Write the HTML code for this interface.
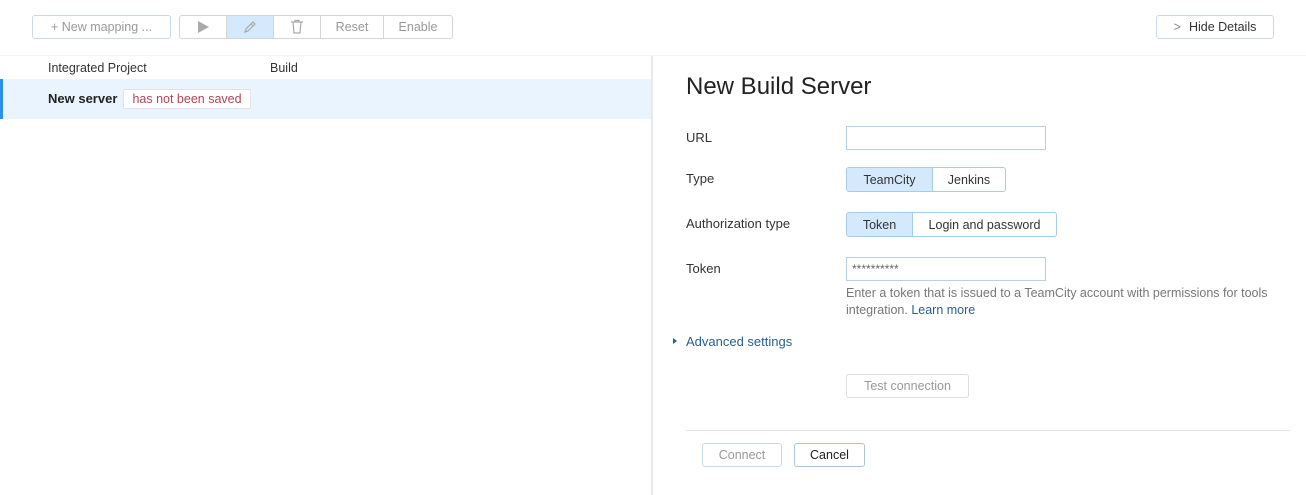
<!DOCTYPE html><html><head><style>
*{box-sizing:border-box;margin:0;padding:0}
body{width:1306px;height:495px;position:relative;background:#fff;font-family:"Liberation Sans",sans-serif;font-size:13px;color:#333;overflow:hidden}
.a{position:absolute}
.btn{position:absolute;border:1px solid #c9d9e8;border-radius:3px;background:#fff;color:#999;font-size:12.5px;display:flex;align-items:center;justify-content:center}
.grp{position:absolute;display:flex;border:1px solid #d5d5d5;border-radius:3px;height:24px;overflow:hidden}
.grp div{border-right:1px solid #d5d5d5;display:flex;align-items:center;justify-content:center;color:#999;font-size:12.5px}
.grp div:last-child{border-right:none}
.seg{position:absolute;display:flex;border:1px solid #a8cbe8;border-radius:3px;height:25px;overflow:hidden}
.seg div{display:flex;align-items:center;justify-content:center;font-size:12.5px;color:#333}
.seg .on{background:#d4eafc;border-right:1px solid #a8cbe8}
.lbl{position:absolute;left:686px;font-size:13px;color:#333}
.inp{position:absolute;left:846px;width:200px;height:24px;border:1px solid #b8d0e4}
</style></head><body>
<div class="btn" style="left:32px;top:15px;width:139px;height:24px">+ New mapping ...</div>
<div class="grp" style="left:179px;top:15px;width:274px">
<div style="width:47px"><svg width="14" height="14"><path d="M2 1 L13 7 L2 13Z" fill="#aaa"/></svg></div>
<div style="width:47px;background:#d4eafc"><svg width="16" height="16"><path d="M3 13 L4 10 L11 3 L13 5 L6 12Z M9 5 L11 7" fill="none" stroke="#aaa" stroke-width="1.2"/></svg></div>
<div style="width:47px"><svg width="14" height="16"><path d="M1 3H13M5 3V1.5H9V3M3 3L4 14H10L11 3" fill="none" stroke="#aaa" stroke-width="1.2"/></svg></div>
<div style="width:63px">Reset</div>
<div style="flex:1">Enable</div>
</div>
<div class="btn" style="left:1156px;top:15px;width:118px;height:24px;color:#333"><span style="color:#888;margin-right:8px">&gt;</span>Hide Details</div>
<div class="a" style="left:0;top:55px;width:1306px;height:1px;background:#f1f3f5"></div>
<div class="a" style="left:48px;top:61px;font-size:12.5px">Integrated Project</div>
<div class="a" style="left:270px;top:61px;font-size:12.5px">Build</div>
<div class="a" style="left:0;top:79px;width:652px;height:40px;background:#e9f4fe;border-left:3px solid #2b8ef0"></div>
<div class="a" style="left:48px;top:91px;font-weight:bold;font-size:13px;color:#222">New server</div>
<div class="a" style="left:123px;top:89px;width:128px;height:20px;background:#fff;border:1px solid #e3e3e3;border-radius:2px;color:#b0455a;font-size:12.5px;text-align:center;line-height:18px">has not been saved</div>
<div class="a" style="left:651px;top:56px;width:2px;height:439px;background:#e6e9ed"></div>
<div class="a" style="left:686px;top:73px;font-size:24px;color:#222">New Build Server</div>
<div class="lbl" style="top:130px">URL</div><div class="inp" style="top:126px"></div>
<div class="lbl" style="top:171px">Type</div>
<div class="seg" style="left:846px;top:167px;width:160px"><div class="on" style="width:86px">TeamCity</div><div style="flex:1">Jenkins</div></div>
<div class="lbl" style="top:216px">Authorization type</div>
<div class="seg" style="left:846px;top:212px;width:211px"><div class="on" style="width:66px">Token</div><div style="flex:1">Login and password</div></div>
<div class="lbl" style="top:261px">Token</div><div class="inp" style="top:257px;color:#666;font-size:12px;padding:4px 5px">**********</div>
<div class="a" style="left:846px;top:285px;width:450px;font-size:12.5px;line-height:17px;color:#777">Enter a token that is issued to a TeamCity account with permissions for tools integration. <span style="color:#2a5d8f">Learn more</span></div>
<div class="a" style="left:673px;top:338px;width:0;height:0;border-left:4px solid #2a5d8f;border-top:3px solid transparent;border-bottom:3px solid transparent"></div>
<div class="a" style="left:686px;top:334px;color:#2a5d8f;font-size:13px">Advanced settings</div>
<div class="btn" style="left:846px;top:374px;width:123px;height:24px;border-color:#ddd">Test connection</div>
<div class="a" style="left:686px;top:430px;width:604px;height:1px;background:#e3e7ec"></div>
<div class="btn" style="left:702px;top:443px;width:80px;height:24px">Connect</div>
<div class="btn" style="left:794px;top:443px;width:71px;height:24px;color:#222;border-color:#a8c4dc">Cancel</div>
</body></html>
